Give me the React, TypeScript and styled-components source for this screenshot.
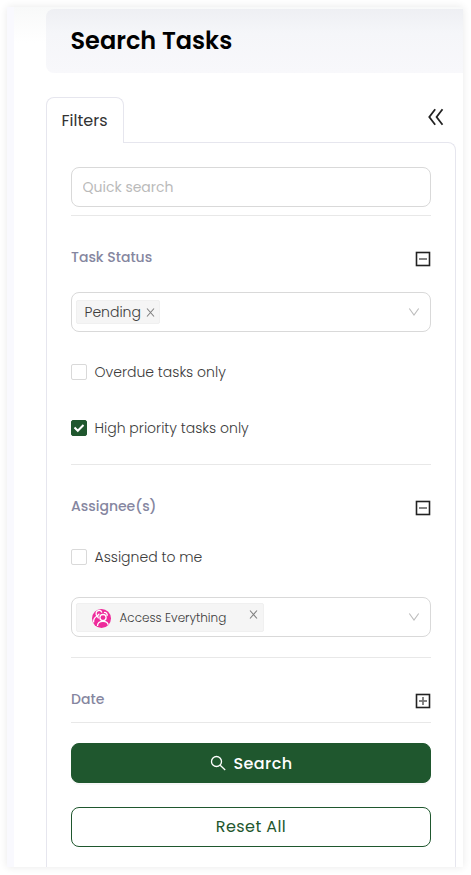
import React from "react";
import styled, { createGlobalStyle } from "styled-components";

const GlobalStyle = createGlobalStyle`
  *, *::before, *::after { box-sizing: border-box; }
  body {
    margin: 0;
    background: #fff;
    overflow: hidden;
    font-family: Poppins, Inter, "Open Sans", sans-serif;
    color: #3c3c3c;
  }
  button, input { font-family: inherit; }
`;

const Stage = styled.div`
  height: 875px;
  padding: 7px 8px 8px 7px;
`;

const Shell = styled.div`
  display: flex;
  flex-direction: column;
  height: 860px;
  padding: 2px 0 0 32px;
  border-left: 7px solid #f9f9fe;
  background: linear-gradient(#f8f9f9 0, #fff 36px);
  box-shadow: 0 0 8px rgba(0, 0, 0, 0.09);
`;

const Header = styled.header`
  display: flex;
  align-items: center;
  flex: none;
  height: 64px;
  padding-left: 24.5px;
  border-radius: 8px 0 0 8px;
  background: linear-gradient(#eeeff3 0, #f5f6f9 24px, #f8f8fb 64px);
`;

const Fit = styled.span<{ $track?: number }>`
  letter-spacing: ${(p) => p.$track ?? 0}px;
  white-space: nowrap;
`;

const Heading = styled.h1`
  margin: 0;
  font-size: 24px;
  line-height: 36px;
  font-weight: 600;
  color: #000;
`;

const TabBar = styled.div`
  display: flex;
  justify-content: space-between;
  flex: none;
  height: 45px;
  margin-top: 24px;
`;

const Tab = styled.div`
  position: relative;
  width: 78px;
  height: 46px;
  padding-left: 14.5px;
  border: 1px solid #e6e6ee;
  border-bottom: 0;
  border-radius: 8px 8px 0 0;
  background: #fff;
  font-size: 16px;
  line-height: 46px;
  font-weight: 400;
  color: #333;
`;

const Collapse = styled.button`
  display: flex;
  width: 16px;
  height: 18px;
  margin: 11px 19px 0 0;
  padding: 0;
  border: 0;
  background: none;
`;

const Panel = styled.section`
  flex: 1;
  width: 410px;
  padding: 24px 24px 0;
  border: 1px solid #e6e6ee;
  border-bottom: 0;
  border-radius: 0 8px 0 0;
  background: #fff;
`;

const SearchInput = styled.input`
  display: block;
  width: 100%;
  height: 40px;
  padding: 0 10.5px;
  border: 1px solid #d9d9d9;
  border-radius: 8px;
  background: #fff;
  font-size: 14px;
  &::placeholder { color: #bababa; opacity: 1; }
`;

const Rule = styled.hr<{ $top: number }>`
  height: 1px;
  margin: ${(p) => p.$top}px 0 0;
  border: 0;
  background: #e8e8e8;
`;

const SectionHead = styled.div`
  display: flex;
  align-items: center;
  justify-content: space-between;
  height: 40px;
  margin-top: 21px;
  font-size: 14px;
  font-weight: 500;
  color: #8586a0;
  svg { margin-top: 4px; }
`;

const SelectBox = styled.div<{ $top: number }>`
  display: flex;
  align-items: center;
  justify-content: space-between;
  height: 40px;
  margin-top: ${(p) => p.$top}px;
  padding: 0 10px 0 4px;
  border: 1px solid #d9d9d9;
  border-radius: 8px;
`;

const Tag = styled.span`
  display: flex;
  align-items: center;
  gap: 5px;
  width: 84px;
  height: 24px;
  padding-left: 7.5px;
  border: 1px solid #f0f0f0;
  border-radius: 2px;
  background: #f5f5f5;
  font-size: 14px;
  font-weight: 300;
`;

const PersonTag = styled(Tag)`
  width: 188px;
  height: 29px;
  padding: 0 5px 0 15px;
  gap: 8.5px;
  font-size: 12px;
  > span { margin-top: 2px; }
  > svg:first-child { margin-top: 2px; }
  > svg:last-child { margin: -5px 0 0 auto; }
`;

const Check = styled.label<{ $top: number }>`
  display: flex;
  align-items: center;
  gap: 7.5px;
  height: 16px;
  margin-top: ${(p) => p.$top}px;
  font-size: 14px;
  font-weight: 300;
`;

const Box = styled.span<{ $on?: boolean }>`
  display: grid;
  place-items: center;
  width: 16px;
  height: 16px;
  border: 1px solid ${(p) => (p.$on ? "#1f572e" : "#d9d9d9")};
  border-radius: 2px;
  background: ${(p) => (p.$on ? "#1f572e" : "#fff")};
`;

const Action = styled.button<{ $primary?: boolean }>`
  display: flex;
  align-items: center;
  justify-content: center;
  gap: 8px;
  width: 100%;
  height: 40px;
  margin-top: ${(p) => (p.$primary ? 20 : 24)}px;
  padding: 0 0 ${(p) => (p.$primary ? 0 : 2)}px;
  border: 1px solid #1f572e;
  border-radius: 8px;
  background: ${(p) => (p.$primary ? "#1f572e" : "#fff")};
  box-shadow: ${(p) => (p.$primary ? "0 2px 0 rgba(0,0,0,.03)" : "none")};
  color: ${(p) => (p.$primary ? "#fff" : "#1f572e")};
  font-size: 16px;
  font-weight: ${(p) => (p.$primary ? 500 : 400)};
`;

const Chevron = () => (
  <svg width="12" height="10" viewBox="0 0 12 10" fill="none" stroke="#bdbdbd" strokeWidth="1.1">
    <path d="M1.3 1.5 6 8 10.7 1.5" />
  </svg>
);

const Cross = () => (
  <svg width="9" height="9" viewBox="0 0 9 9" fill="none" stroke="#808080" strokeWidth="1.1">
    <path d="M1 .5 8 8.5M8 .5 1 8.5" />
  </svg>
);

const Toggle = ({ plus }: { plus?: boolean }) => (
  <svg width="16" height="16" viewBox="0 0 16 16" fill="none">
    <rect x="1.5" y="1.5" width="13" height="13" stroke="#222" strokeWidth="1.6" />
    <path d="M4 8H12" stroke="#777" strokeWidth="1.8" />
    {plus && <path d="M8 4V12" stroke="#777" strokeWidth="1.8" />}
  </svg>
);

const People = () => (
  <svg width="19" height="19" viewBox="0 0 19 19">
    <defs>
      <clipPath id="disc"><circle cx="9.5" cy="9.5" r="9.5" /></clipPath>
    </defs>
    <g clipPath="url(#disc)" fill="none" stroke="#fff" strokeWidth="1.3">
      <rect width="19" height="19" fill="#ee2a9b" stroke="none" />
      <path d="M5.2 7C3.4 5.2 3.7 2 6.6 1.5c1.6-.2 2.8.6 3.3 1.9M1.6 13.5C1.4 10.6 2.6 8.2 5.2 7M6.6 9.4C5.2 7.8 5.6 5.6 7.4 4.8" />
      <circle cx="11" cy="8.6" r="3.1" />
      <path d="M5.5 17C5.5 14 7.4 12.3 11 12.3S16.3 14 16.4 17M12 3.6C13.8 3 15.8 4.6 15 7" />
    </g>
  </svg>
);

export default function App() {
  return (
    <Stage>
      <GlobalStyle />
      <Shell>
        <Header>
          <Heading>Search Tasks</Heading>
        </Header>
        <TabBar>
          <Tab><Fit>Filters</Fit></Tab>
          <Collapse aria-label="Collapse filters">
            <svg width="16" height="18" viewBox="0 0 16 18" fill="none" stroke="#222" strokeWidth="1.8">
              <path d="M7.2 1.3 1.3 9l5.9 7.7M14.5 1.3 8.6 9l5.9 7.7" />
            </svg>
          </Collapse>
        </TabBar>
        <Panel>
          <SearchInput placeholder="Quick search" />
          <Rule $top={8} />
          <SectionHead><Fit>Task Status</Fit><Toggle /></SectionHead>
          <SelectBox $top={15}>
            <Tag><Fit>Pending</Fit><Cross /></Tag>
            <Chevron />
          </SelectBox>
          <Check $top={32}><Box /><Fit>Overdue tasks only</Fit></Check>
          <Check $top={40}>
            <Box $on>
              <svg width="12" height="10" viewBox="0 0 12 10" fill="none" stroke="#fff" strokeWidth="2">
                <path d="M1.5 4.5 4.8 7.8 10.5 2" />
              </svg>
            </Box>
            <Fit>High priority tasks only</Fit>
          </Check>
          <Rule $top={28} />
          <SectionHead><Fit>Assignee(s)</Fit><Toggle /></SectionHead>
          <Check $top={23}><Box /><Fit>Assigned to me</Fit></Check>
          <SelectBox $top={32}>
            <PersonTag><People /><Fit>Access Everything</Fit><Cross /></PersonTag>
            <Chevron />
          </SelectBox>
          <Rule $top={20} />
          <SectionHead><Fit>Date</Fit><Toggle plus /></SectionHead>
          <Rule $top={3} />
          <Action $primary>
            <svg width="16" height="16" viewBox="0 0 16 16" fill="none" stroke="#fff" strokeWidth="1.3">
              <circle cx="6.5" cy="6.5" r="5" /><path d="m10.2 10.2 5 4.8" />
            </svg>
            <Fit $track={0.4}>Search</Fit>
          </Action>
          <Action><Fit $track={0.4}>Reset All</Fit></Action>
        </Panel>
      </Shell>
    </Stage>
  );
}
